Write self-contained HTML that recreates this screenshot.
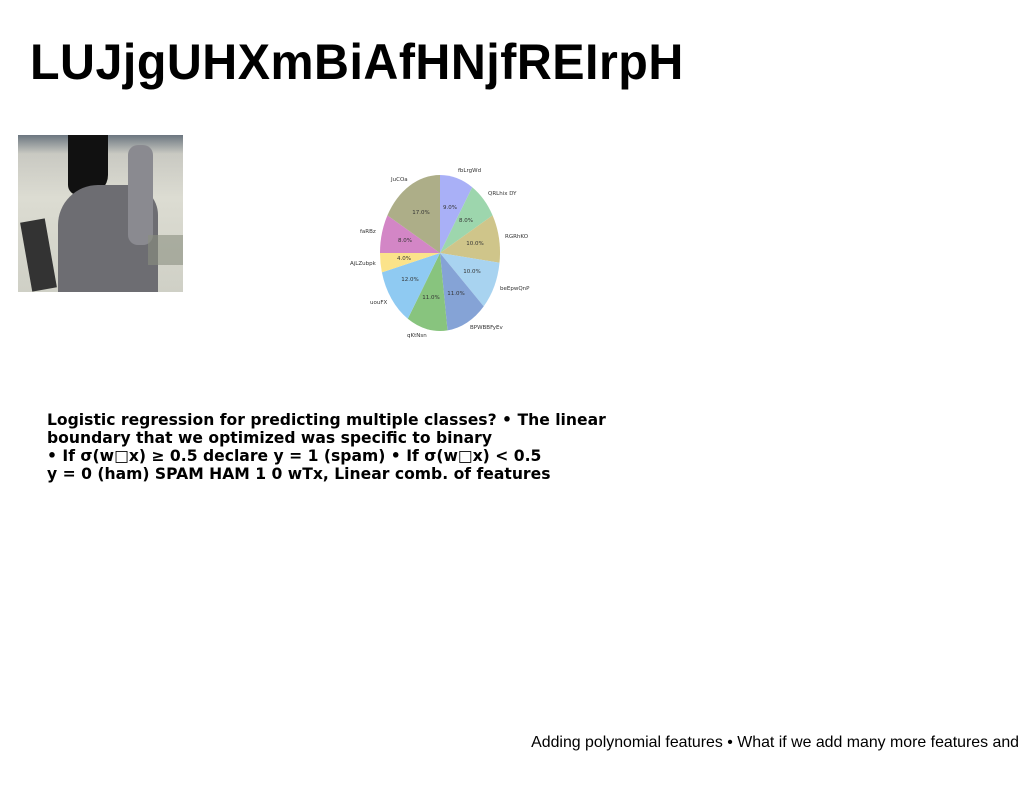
<!DOCTYPE html>
<html><head><meta charset="utf-8"><style>
body{margin:0;width:1024px;height:788px;background:#fff;position:relative;overflow:hidden;font-family:"Liberation Sans",sans-serif}
.t{position:absolute;left:30px;top:34px;font-weight:bold;font-size:50px;line-height:56px;white-space:nowrap;letter-spacing:0.5px;transform-origin:0 0;transform:scaleX(0.968)}
.b{position:absolute;left:47px;top:411px;font-family:"DejaVu Sans",sans-serif;font-weight:bold;font-size:15.6px;line-height:18px;white-space:nowrap}
.f{position:absolute;right:5px;top:734px;font-size:15.9px;white-space:nowrap}
.img{position:absolute;left:18px;top:135px;width:165px;height:157px;background:linear-gradient(180deg,#6b7680 0%,#c9c9c2 12%,#dcdcd2 40%,#cfd0c6 100%);overflow:hidden}
</style></head><body>
<div class="t">LUJjgUHXmBiAfHNjfREIrpH</div>
<div class="img">
<div style="position:absolute;left:50px;top:0;width:40px;height:60px;background:#111;border-radius:0 0 20px 10px"></div>
<div style="position:absolute;left:40px;top:50px;width:100px;height:110px;background:#6d6d72;border-radius:40px 30px 0 0"></div>
<div style="position:absolute;left:110px;top:10px;width:25px;height:100px;background:#8a8a90;border-radius:10px"></div>
<div style="position:absolute;left:8px;top:85px;width:25px;height:70px;background:#333;transform:rotate(-10deg)"></div>
<div style="position:absolute;left:130px;top:100px;width:35px;height:30px;background:#8a9080;opacity:.6"></div>
</div>
<svg style="position:absolute;left:0;top:0" width="1024" height="788" font-family="DejaVu Sans,sans-serif" font-size="5.5" fill="#333">
<path d="M440,253L440,175A60,78 0 0 1 472.2,187.2Z" fill="#a9b0f7"/>
<path d="M440,253L472.2,187.2A60,78 0 0 1 492.6,215.4Z" fill="#9dd6ad"/>
<path d="M440,253L492.6,215.4A60,78 0 0 1 499.5,262.8Z" fill="#cfc58a"/>
<path d="M440,253L499.5,262.8A60,78 0 0 1 483.7,306.4Z" fill="#a8d3f0"/>
<path d="M440,253L483.7,306.4A60,78 0 0 1 447.5,330.4Z" fill="#85a3d6"/>
<path d="M440,253L447.5,330.4A60,78 0 0 1 407.8,318.8Z" fill="#88c47e"/>
<path d="M440,253L407.8,318.8A60,78 0 0 1 381.9,272.4Z" fill="#8fcaf2"/>
<path d="M440,253L381.9,272.4A60,78 0 0 1 380,253Z" fill="#fbe38a"/>
<path d="M440,253L380,253A60,78 0 0 1 387.4,215.4Z" fill="#d386c6"/>
<path d="M440,253L387.4,215.4A60,78 0 0 1 440,175Z" fill="#adae88"/>
<g text-anchor="middle">
<text x="450" y="209">9.0%</text><text x="466" y="222">8.0%</text><text x="475" y="245">10.0%</text>
<text x="472" y="273">10.0%</text><text x="456" y="295">11.0%</text><text x="431" y="299">11.0%</text>
<text x="410" y="281">12.0%</text><text x="404" y="260">4.0%</text><text x="405" y="242">8.0%</text><text x="421" y="214">17.0%</text>
</g>
<text x="458" y="172">fbLrgWd</text><text x="488" y="195">QRLhix DY</text><text x="505" y="238">RGRhKO</text>
<text x="500" y="290">beEpwQnP</text><text x="470" y="329">BPWBBFyEv</text><text x="407" y="337">qKtNsn</text>
<text x="370" y="304">uouFX</text><text x="350" y="265">AjLZubpk</text><text x="360" y="233">faRBz</text><text x="391" y="181">JuCOa</text>
</svg>
<div class="b">Logistic regression for predicting multiple classes? • The linear<br>boundary that we optimized was specific to binary<br>• If σ(w□x) ≥ 0.5 declare y = 1 (spam) • If σ(w□x) &lt; 0.5<br>y = 0 (ham) SPAM HAM 1 0 wTx, Linear comb. of features</div>
<div class="f">Adding polynomial features • What if we add many more features and</div>
</body></html>
